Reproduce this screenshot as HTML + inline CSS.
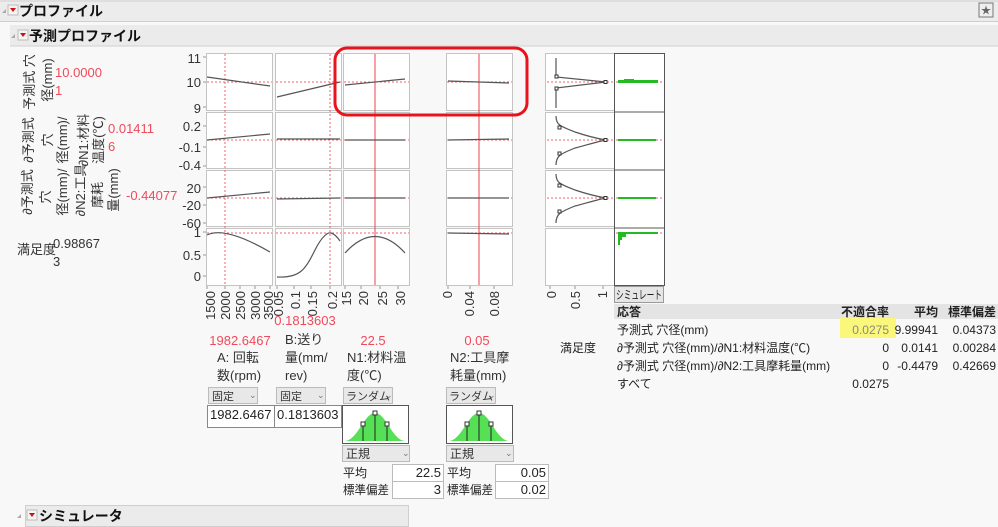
<!DOCTYPE html>
<html><head><meta charset="utf-8"><style>
html,body{margin:0;padding:0;background:#f8f8f8;width:998px;height:527px;overflow:hidden}
svg{display:block;font-family:"Liberation Sans","Noto Sans CJK JP",sans-serif}
</style></head><body>
<svg width="998" height="527" viewBox="0 0 998 527" xmlns="http://www.w3.org/2000/svg">
<rect x="0" y="0" width="998" height="22" fill="#ececec"/>
<line x1="0" y1="1" x2="998" y2="1" fill="none" stroke="#d0d0d0"/>
<line x1="0" y1="21.5" x2="998" y2="21.5" stroke="#cfcfcf"/>
<path d="M2,13 L6,9 L6,13Z" fill="#aaa"/>
<rect x="8" y="5" width="10" height="10" fill="#f4f4f4" stroke="#bbb"/>
<path d="M10,8 L16,8 L13,12Z" fill="#d01010"/>
<text x="19" y="16" font-size="14" font-weight="bold" fill="#111">プロファイル</text>
<rect x="979" y="3" width="14" height="14" fill="#eee" stroke="#777"/>
<text x="986" y="14" font-size="10" text-anchor="middle" fill="#666">★</text>
<rect x="10" y="25" width="988" height="21" fill="#ebebeb"/>
<line x1="10" y1="46" x2="998" y2="46" stroke="#d0d0d0"/>
<path d="M11,38 L15,34 L15,38Z" fill="#aaa"/>
<rect x="18" y="30" width="10" height="10" fill="#f4f4f4" stroke="#bbb"/>
<path d="M20,33 L26,33 L23,37Z" fill="#d01010"/>
<text x="29" y="41" font-size="14" font-weight="bold" fill="#111">予測プロファイル</text>

<g font-size="13" fill="#333">
<text transform="translate(34,82) rotate(-90)" text-anchor="middle">予測式 穴</text>
<text transform="translate(52,80) rotate(-90)" text-anchor="middle">径(mm)</text>
<text transform="translate(33,140) rotate(-90)" text-anchor="middle">∂予測式</text>
<text transform="translate(52,140) rotate(-90)" text-anchor="middle">穴</text>
<text transform="translate(67,140) rotate(-90)" text-anchor="middle">径(mm)/</text>
<text transform="translate(88,140) rotate(-90)" text-anchor="middle">∂N1:材料</text>
<text transform="translate(103,140) rotate(-90)" text-anchor="middle">温度(℃)</text>
<text transform="translate(32,192) rotate(-90)" text-anchor="middle">∂予測式</text>
<text transform="translate(50,197) rotate(-90)" text-anchor="middle">穴</text>
<text transform="translate(67,192) rotate(-90)" text-anchor="middle">径(mm)/</text>
<text transform="translate(85,190) rotate(-90)" text-anchor="middle">∂N2:工具</text>
<text transform="translate(102,195) rotate(-90)" text-anchor="middle">摩耗</text>
<text transform="translate(118,190) rotate(-90)" text-anchor="middle">量(mm)</text>
<text x="17" y="254">満足度</text>
<text x="53" y="248">0.98867</text>
<text x="53" y="266">3</text>
</g>
<g font-size="13" fill="#f04a5a">
<text x="55" y="77">10.0000</text>
<text x="55" y="95">1</text>
<text x="108" y="133">0.01411</text>
<text x="108" y="151">6</text>
<text x="126" y="200">-0.44077</text>
</g>

<g font-size="13" fill="#333" text-anchor="end">
<text x="201" y="63">11</text><text x="201" y="87">10</text><text x="201" y="113">9</text>
<text x="201" y="131">0.2</text><text x="201" y="152">-0.1</text><text x="201" y="170">-0.4</text>
<text x="201" y="193">20</text><text x="201" y="210">-20</text><text x="201" y="228">-60</text>
<text x="201" y="237">1</text><text x="201" y="260">0.5</text><text x="201" y="281">0</text>
</g>
<g stroke="#999">
<path d="M203,57h3M203,82h3M203,107h3M203,126h3M203,147h3M203,166h3M203,187h3M203,205h3M203,223h3M203,232h3M203,255h3M203,276h3"/>
</g>

<g fill="#fff" stroke="#c4c4c4">
<rect x="206.5" y="53.5" width="66" height="57"/><rect x="275.5" y="53.5" width="66" height="57"/><rect x="343.5" y="53.5" width="66" height="57"/><rect x="446.5" y="53.5" width="66" height="57"/>
<rect x="206.5" y="112.5" width="66" height="56"/><rect x="275.5" y="112.5" width="66" height="56"/><rect x="343.5" y="112.5" width="66" height="56"/><rect x="446.5" y="112.5" width="66" height="56"/>
<rect x="206.5" y="170.5" width="66" height="56"/><rect x="275.5" y="170.5" width="66" height="56"/><rect x="343.5" y="170.5" width="66" height="56"/><rect x="446.5" y="170.5" width="66" height="56"/>
<rect x="206.5" y="228.5" width="66" height="57"/><rect x="275.5" y="228.5" width="66" height="57"/><rect x="343.5" y="228.5" width="66" height="57"/><rect x="446.5" y="228.5" width="66" height="57"/>
<rect x="545.5" y="53.5" width="69" height="57"/><rect x="545.5" y="112.5" width="69" height="56"/><rect x="545.5" y="170.5" width="69" height="56"/><rect x="545.5" y="228.5" width="69" height="57"/>
</g>
<rect x="614.5" y="53.5" width="50" height="232" fill="#fff" stroke="#555"/>
<path d="M614,112h50M614,170h50M614,228h50" stroke="#555"/>
<g stroke="#f06070" stroke-dasharray="2,2" stroke-width="1">
<path d="M207,82h65M276,82h65M344,82h65M447,82h65M547,82h66M616,82h48"/>
<path d="M207,140h65M276,140h65M344,140h65M447,140h65M547,140h66M616,140h48"/>
<path d="M207,198h65M276,198h65M344,198h65M447,198h65M547,198h66M616,198h48"/>
<path d="M207,233h65M276,233h65M344,233h65M447,233h65M616,233h48"/>
<path d="M225,54v231M330,54v231"/>
</g>
<path d="M375,54v231M479,54v231" stroke="#f04050" stroke-width="1"/>
<g fill="none" stroke="#555" stroke-width="1.2">
<path d="M207,77L270,86M277,97L340,82M345,85L405,79M448,81L509,83"/>
<path d="M207,140L270,134M277,139L340,139M345,140L405,140M448,140L509,139"/>
<path d="M207,198L270,192M277,199L340,198M345,198L405,198M448,198L509,198"/>
<path d="M207,235 Q225,226 270,252"/>
<path d="M277,277 C300,278 305,270 315,250 C322,236 328,232 331,233 C335,234 338,238 340,241"/>
<path d="M345,253 Q375,220 405,253"/>
<path d="M448,233L509,234"/>
<path d="M556,58V77L606,82L556,88V108"/>
<path d="M556,116 C556,125 560,126 575,132 C590,137 600,139 606,140 C600,141 590,144 575,148 C560,154 556,156 556,165"/>
<path d="M556,174 C556,183 560,184 575,190 C590,195 600,197 606,198 C600,199 590,202 575,206 C560,212 556,214 556,223"/>
</g>
<g fill="#fff" stroke="#333">
<rect x="555" y="75" width="3" height="3"/><rect x="555" y="87" width="3" height="3"/><rect x="604" y="80.5" width="3" height="3"/>
<rect x="558" y="126" width="3" height="3"/><rect x="558" y="152" width="3" height="3"/><rect x="604" y="138.5" width="3" height="3"/>
<rect x="558" y="184" width="3" height="3"/><rect x="558" y="210" width="3" height="3"/><rect x="604" y="196.5" width="3" height="3"/>
</g>
<g fill="#22bb22">
<path d="M618,80h6v-1h10v1h24v3h-40z"/><rect x="618" y="139" width="38" height="2"/><rect x="618" y="197" width="38" height="2"/>
<path d="M618,232h40v2h-32v3h-4v3h-2v5h-2z"/>
</g>
<rect x="335" y="48" width="192" height="67" rx="12" fill="none" stroke="#e8141b" stroke-width="3"/>

<g stroke="#999"><path d="M207,286v3M225,286v3M240,286v3M255,286v3M270,286v3M277,286v3M294,286v3M311,286v3M330,286v3M345,286v3M361,286v3M380,286v3M398,286v3M448,286v3M470,286v3M494,286v3M550,286v3M575,286v3M603,286v3"/></g>
<g font-size="13" fill="#333" text-anchor="end">
<text transform="translate(215,291) rotate(-90)">1500</text>
<text transform="translate(230,291) rotate(-90)">2000</text>
<text transform="translate(245,291) rotate(-90)">2500</text>
<text transform="translate(260,291) rotate(-90)">3000</text>
<text transform="translate(273,291) rotate(-90)">3500</text>
<text transform="translate(283,291) rotate(-90)">0.05</text>
<text transform="translate(300,291) rotate(-90)">0.1</text>
<text transform="translate(317,291) rotate(-90)">0.15</text>
<text transform="translate(337,291) rotate(-90)">0.2</text>
<text transform="translate(351,291) rotate(-90)">15</text>
<text transform="translate(368,291) rotate(-90)">20</text>
<text transform="translate(387,291) rotate(-90)">25</text>
<text transform="translate(405,291) rotate(-90)">30</text>
<text transform="translate(452,291) rotate(-90)">0</text>
<text transform="translate(474,291) rotate(-90)">0.04</text>
<text transform="translate(499,291) rotate(-90)">0.08</text>
<text transform="translate(556,291) rotate(-90)">0</text>
<text transform="translate(580,291) rotate(-90)">0.5</text>
<text transform="translate(607,291) rotate(-90)">1</text>
</g>

<g font-size="13" fill="#f04a5a" text-anchor="middle">
<text x="240" y="345">1982.6467</text>
<text x="305" y="325">0.1813603</text>
<text x="373" y="345">22.5</text>
<text x="477" y="345">0.05</text>
</g>
<g font-size="13" fill="#333">
<text x="217" y="362">A: 回転</text><text x="217" y="380">数(rpm)</text>
<text x="285" y="344">B:送り</text><text x="285" y="362">量(mm/</text><text x="285" y="380">rev)</text>
<text x="347" y="362">N1:材料温</text><text x="347" y="380">度(℃)</text>
<text x="450" y="362">N2:工具摩</text><text x="450" y="380">耗量(mm)</text>
</g>
<g fill="#e8e8e8" stroke="#bbb">
<rect x="208.5" y="387.5" width="49" height="16"/><rect x="276.5" y="387.5" width="49" height="16"/>
<rect x="343.5" y="387.5" width="49" height="16"/><rect x="446.5" y="387.5" width="49" height="16"/>
<rect x="342.5" y="445.5" width="67" height="16"/><rect x="446.5" y="445.5" width="67" height="16"/>
</g>
<g font-size="11" fill="#333">
<text x="212" y="400">固定</text><text x="280" y="400">固定</text><text x="346" y="400">ランダム</text><text x="449" y="400">ランダム</text>
<text x="346" y="458" font-size="12">正規</text><text x="450" y="458" font-size="12">正規</text>
</g>
<g font-size="9" fill="#777"><text x="249" y="398">⌄</text><text x="317" y="398">⌄</text><text x="385" y="398">⌄</text><text x="488" y="398">⌄</text><text x="402" y="456">⌄</text><text x="505" y="456">⌄</text></g>
<g fill="#fff" stroke="#888">
<rect x="207.5" y="405.5" width="67" height="22"/><rect x="274.5" y="405.5" width="67" height="22"/>
</g>
<g font-size="13" fill="#222"><text x="210" y="419">1982.6467</text><text x="277" y="419">0.1813603</text></g>
<g>
<rect x="342.5" y="405.5" width="66" height="38" fill="#fff" stroke="#555"/>
<path d="M345,441 C358,440 364,413 375,413 C386,413 392,440 405,441Z" fill="#55e055"/>
<path d="M363,424V441M375,413V441M387,424V441" stroke="#222"/>
<g fill="#fff" stroke="#333"><rect x="361" y="422" width="4" height="4"/><rect x="373" y="411" width="4" height="4"/><rect x="385" y="422" width="4" height="4"/></g>
<rect x="446.5" y="405.5" width="66" height="38" fill="#fff" stroke="#555"/>
<path d="M449,441 C462,440 468,413 479,413 C490,413 496,440 509,441Z" fill="#55e055"/>
<path d="M467,424V441M479,413V441M491,424V441" stroke="#222"/>
<g fill="#fff" stroke="#333"><rect x="465" y="422" width="4" height="4"/><rect x="477" y="411" width="4" height="4"/><rect x="489" y="422" width="4" height="4"/></g>
</g>
<g fill="#fff" stroke="#bbb">
<rect x="392.5" y="464.5" width="51" height="17"/><rect x="392.5" y="481.5" width="51" height="17"/>
<rect x="495.5" y="464.5" width="53" height="17"/><rect x="495.5" y="481.5" width="53" height="17"/>
</g>
<g font-size="12" fill="#222">
<text x="343" y="477">平均</text><text x="343" y="494" textLength="46" lengthAdjust="spacingAndGlyphs">標準偏差</text>
<text x="447" y="477">平均</text><text x="447" y="494" textLength="46" lengthAdjust="spacingAndGlyphs">標準偏差</text>
</g>
<g font-size="13" fill="#222" text-anchor="end">
<text x="441" y="477">22.5</text><text x="441" y="494">3</text>
<text x="546" y="477">0.05</text><text x="546" y="494">0.02</text>
</g>

<rect x="614.5" y="286.5" width="49" height="16" fill="#e6e6e6" stroke="#999"/>
<text x="616" y="299" font-size="12" fill="#222" textLength="46" lengthAdjust="spacingAndGlyphs">シミュレート</text>
<rect x="614" y="304" width="384" height="15" fill="#e4e4e4"/>
<rect x="840" y="318" width="56" height="20" fill="#fbf77a"/>
<g font-size="12" fill="#222">
<text x="617" y="316" font-weight="bold">応答</text>
<text x="617" y="334">予測式 穴径(mm)</text>
<text x="617" y="352">∂予測式 穴径(mm)/∂N1:材料温度(℃)</text>
<text x="617" y="370">∂予測式 穴径(mm)/∂N2:工具摩耗量(mm)</text>
<text x="617" y="388">すべて</text>
<text x="560" y="352">満足度</text>
</g>
<g font-size="12" fill="#222" text-anchor="end">
<text x="889" y="316" font-weight="bold">不適合率</text><text x="938" y="316" font-weight="bold">平均</text><text x="996" y="316" font-weight="bold">標準偏差</text>
<text x="889" y="334" fill="#888">0.0275</text><text x="938" y="334">9.99941</text><text x="996" y="334">0.04373</text>
<text x="889" y="352">0</text><text x="938" y="352">0.0141</text><text x="996" y="352">0.00284</text>
<text x="889" y="370">0</text><text x="938" y="370">-0.4479</text><text x="996" y="370">0.42669</text>
<text x="889" y="388">0.0275</text>
</g>

<rect x="25.5" y="505.5" width="383" height="21" fill="#ebebeb" stroke="#cfcfcf"/>
<path d="M17,518 L21,514 L21,518Z" fill="#aaa"/>
<rect x="27" y="510" width="10" height="10" fill="#f4f4f4" stroke="#bbb"/>
<path d="M29,513 L35,513 L32,517Z" fill="#d01010"/>
<text x="39" y="521" font-size="14" font-weight="bold" fill="#111">シミュレータ</text>
</svg>
</body></html>
